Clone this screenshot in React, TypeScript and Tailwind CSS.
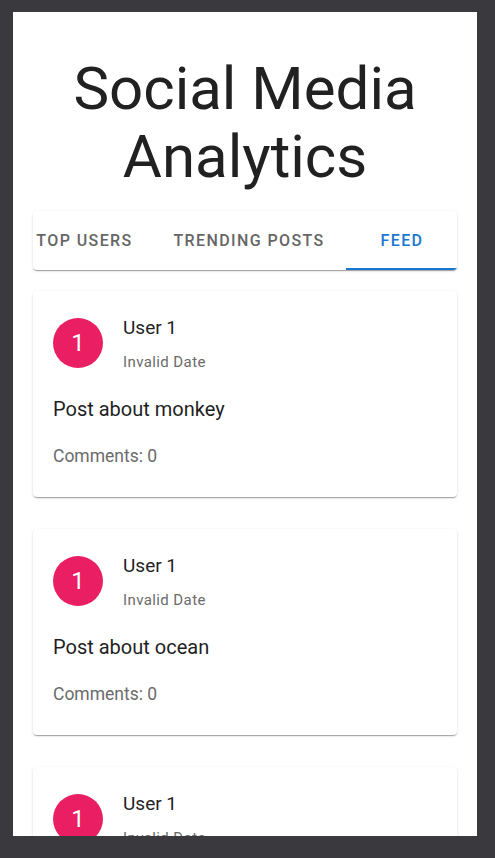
import React from "react";

const posts = ["monkey", "ocean", "mountain"];

function PostCard({ topic }: { topic: string }) {
  return (
    <div className="rounded-[4px] bg-white pt-[27px] px-[20px] pb-[29px] shadow-[0px_2px_1px_-1px_rgba(0,0,0,0.2),0px_1px_1px_0px_rgba(0,0,0,0.14),0px_1px_3px_0px_rgba(0,0,0,0.12)] shrink-0">
      <div className="flex items-start">
        <div className="w-[50px] h-[50px] rounded-full bg-[#e91e63] flex items-center justify-center text-white text-[24px] leading-none shrink-0">
          1
        </div>
        <div className="ml-[20px] flex flex-col">
          <div className="text-[19px] leading-[22px] text-[#1f1f1f] mt-[-1px]">User 1</div>
          <div className="text-[15px] leading-[18px] text-[#6b6b6b] mt-[14px] tracking-[0.4px]">Invalid Date</div>
        </div>
      </div>
      <div className="mt-[24px] text-[20px] leading-[28px] text-[#1f1f1f]">Post about {topic}</div>
      <div className="mt-[21px] text-[17.5px] leading-[24px] text-[#6b6b6b]">Comments: 0</div>
    </div>
  );
}

export default function App() {
  return (
    <div
      className="w-[495px] h-[858px] bg-[#3a3a3e] pt-[12px] pl-[13px] overflow-hidden"
      style={{ fontFamily: "Roboto, 'Noto Sans', sans-serif" }}
    >
      <div className="w-[464px] h-[824px] bg-white overflow-hidden px-[20px] pt-[43px] flex flex-col">
        <h1 className="text-center text-[60px] leading-[68px] font-normal text-[#212121]">
          Social Media Analytics
        </h1>
        <div className="mt-[20px] h-[59px] rounded-[4px] bg-white overflow-hidden relative shadow-[0px_2px_1px_-1px_rgba(0,0,0,0.2),0px_1px_1px_0px_rgba(0,0,0,0.14),0px_1px_3px_0px_rgba(0,0,0,0.12)] shrink-0">
          <div className="flex h-full ml-[-16px] text-[16px] font-medium tracking-[1.4px]">
            <div className="w-[135px] shrink-0 flex items-center justify-center text-[#666666]">TOP USERS</div>
            <div className="w-[194px] shrink-0 flex items-center justify-center text-[#666666]">TRENDING POSTS</div>
            <div className="w-[112px] shrink-0 flex items-center justify-center text-[#1976d2] relative">
              FEED
              <div className="absolute left-0 right-0 bottom-0 h-[2px] bg-[#1976d2]" />
            </div>
          </div>
        </div>
        <div className="mt-[21px] flex flex-col gap-[32px]">
          {posts.map((p) => (
            <PostCard key={p} topic={p} />
          ))}
        </div>
      </div>
    </div>
  );
}
